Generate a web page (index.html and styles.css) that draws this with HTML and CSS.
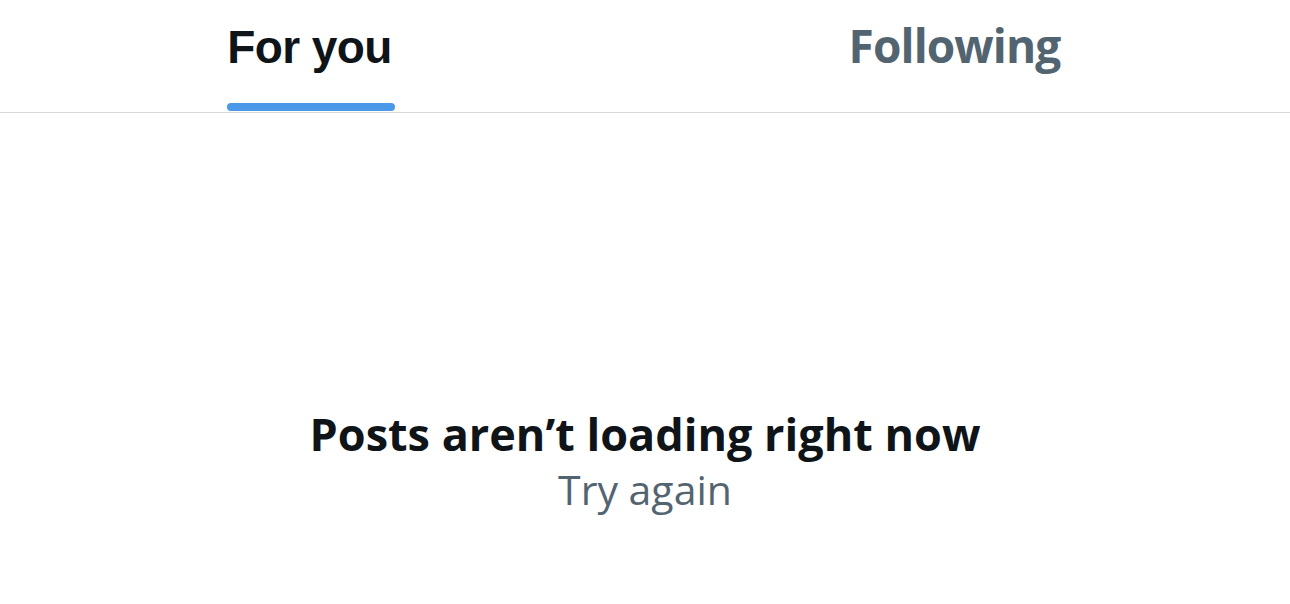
FILE: index.html
```html
<!DOCTYPE html>
<html lang="en">
<head>
<meta charset="utf-8">
<title>Home</title>
<link rel="stylesheet" href="styles.css">
</head>
<body>
<div class="page">
  <nav class="tabs">
    <a class="tab" href="#">
      <span class="tab-inner">
        <span class="tab-label tab-label-foryou">For you</span>
        <span class="tab-indicator"></span>
      </span>
    </a>
    <a class="tab" href="#">
      <span class="tab-inner">
        <span class="tab-label tab-label-following">Following</span>
      </span>
    </a>
  </nav>
  <main class="feed">
    <div class="empty">
      <h2 class="empty-title">Posts aren’t loading right now</h2>
      <button class="retry" type="button">Try again</button>
    </div>
  </main>
</div>
</body>
</html>
```
FILE: styles.css
```css
html, body {
  margin: 0;
  padding: 0;
  background: #ffffff;
}
.page {
  width: 1290px;
  height: 604px;
  display: flex;
  flex-direction: column;
}
.tabs {
  display: flex;
  height: 112px;
  flex: none;
  border-bottom: 1px solid #d6d9dc;
}
.tab {
  flex: 1;
  display: flex;
  justify-content: center;
  text-decoration: none;
  padding-right: 26px;
}
.tab-inner {
  display: flex;
  flex-direction: column;
  height: 111px;
}
.tab-label {
  display: block;
  line-height: 56px;
  font-weight: 700;
  white-space: nowrap;
}
.tab-label-foryou {
  padding-top: 19px;
  font-family: "Liberation Sans", Arial, sans-serif;
  font-size: 46px;
  letter-spacing: -0.6px;
  color: #0f1419;
}
.tab-label-following {
  padding-top: 17px;
  font-family: "Open Sans", sans-serif;
  font-size: 46px;
  letter-spacing: -0.9px;
  color: #536471;
}
.tab-indicator {
  display: block;
  margin-top: auto;
  margin-left: 0;
  margin-right: -3px;
  height: 8px;
  border-radius: 4px;
  background: #4a99e9;
}
.feed {
  flex: 1;
  display: flex;
  flex-direction: column;
  align-items: center;
}
.empty {
  margin-top: 293px;
  display: flex;
  flex-direction: column;
  align-items: center;
}
.empty-title {
  margin: 0;
  font-family: "Open Sans", sans-serif;
  font-weight: 700;
  font-size: 45px;
  line-height: 56px;
  color: #0f1419;
  white-space: nowrap;
}
.retry {
  margin-top: 2px;
  border: 0;
  background: none;
  padding: 0;
  font-family: "Open Sans", sans-serif;
  font-weight: 400;
  font-size: 41px;
  line-height: 50px;
  color: #536471;
  cursor: pointer;
}
```
